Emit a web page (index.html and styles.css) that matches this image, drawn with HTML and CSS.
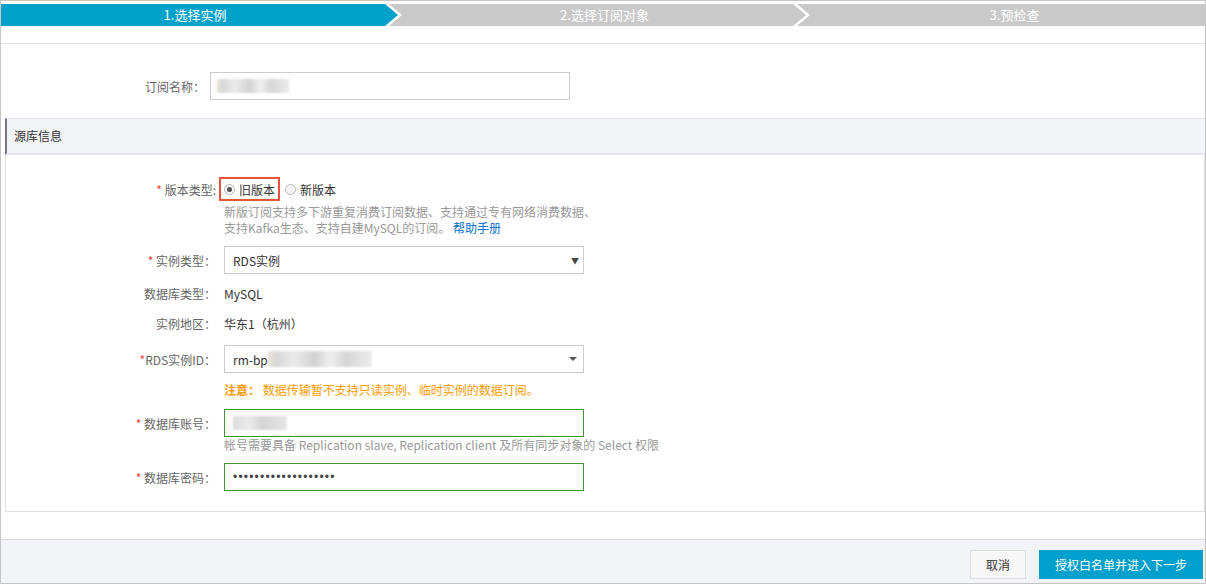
FILE: index.html
```html
<!DOCTYPE html>
<html lang="zh-CN">
<head>
<meta charset="utf-8">
<title>选择实例</title>
<link rel="stylesheet" href="styles.css">
</head>
<body>
<div class="frame">
  <div class="topbar">
    <div class="steps">
      <div class="step step1">1.选择实例</div>
      <div class="step step2">2.选择订阅对象</div>
      <div class="step step3">3.预检查</div>
    </div>
  </div>

  <div class="content">
    <div class="name-row">
      <label class="name-label">订阅名称：</label>
      <div class="field name-input"><span class="blur blur-name"></span></div>
    </div>

    <div class="section">
      <div class="section-head">源库信息</div>
      <div class="section-body">
        <div class="row row-radio">
          <label class="lbl"><span class="req">*</span> 版本类型:</label>
          <div class="ctrl radios">
            <span class="highlight"><span class="radio checked"></span><span class="radio-text">旧版本</span></span>
            <span class="radio"></span><span class="radio-text dark">新版本</span>
          </div>
        </div>
        <div class="row-help">
          <div class="help">新版订阅支持多下游重复消费订阅数据、支持通过专有网络消费数据、<br>支持Kafka生态、支持自建MySQL的订阅。 <a class="link">帮助手册</a></div>
        </div>
        <div class="row row-select1">
          <label class="lbl"><span class="req">*</span> 实例类型：</label>
          <div class="field select"><span>RDS实例</span><span class="arrow">▼</span></div>
        </div>
        <div class="row row-text1">
          <label class="lbl">数据库类型：</label>
          <div class="value">MySQL</div>
        </div>
        <div class="row row-text2">
          <label class="lbl">实例地区：</label>
          <div class="value">华东1（杭州）</div>
        </div>
        <div class="row row-select2">
          <label class="lbl"><span class="req">*</span>RDS实例ID：</label>
          <div class="field select"><span>rm-bp</span><span class="blur blur-id"></span><span class="caret"></span></div>
        </div>
        <div class="row-warn">
          <div class="warn"><b>注意：</b> 数据传输暂不支持只读实例、临时实例的数据订阅。</div>
        </div>
        <div class="row row-account">
          <label class="lbl"><span class="req">*</span> 数据库账号：</label>
          <div class="field ok"><span class="blur blur-acc"></span></div>
        </div>
        <div class="row-help2">
          <div class="help">帐号需要具备 Replication slave, Replication client 及所有同步对象的 Select 权限</div>
        </div>
        <div class="row row-pass">
          <label class="lbl"><span class="req">*</span> 数据库密码：</label>
          <div class="field ok"><span class="dots">•••••••••••••••••••</span></div>
        </div>
      </div>
    </div>
  </div>

  <div class="footer">
    <button class="btn">取消</button>
    <button class="btn primary">授权白名单并进入下一步</button>
  </div>
</div>
</body>
</html>
```
FILE: styles.css
```css
* { box-sizing: border-box; }
body {
  margin: 0;
  font-family: "Noto Sans CJK SC", "Liberation Sans", sans-serif;
  font-size: 12px;
  color: #333;
  background: #fff;
}
.frame {
  width: 1206px;
  height: 584px;
  border: 1px solid #c6c6c6;
  display: flex;
  flex-direction: column;
}
.topbar {
  height: 43px;
  border-bottom: 1px solid #e3e5e8;
  padding-top: 3px;
}
.steps { display: flex; height: 22px; }
.step {
  height: 22px;
  line-height: 22px;
  text-align: center;
  color: #fff;
  font-size: 13px;
  background: #c9c9c9;
}
.step1 {
  width: 397px;
  background: #00a2c9;
  padding-right: 9px;
  clip-path: polygon(0 0, calc(100% - 13px) 0, 100% 50%, calc(100% - 13px) 100%, 0 100%);
}
.step2 {
  width: 417px;
  margin-left: -9px;
  padding-left: 27px;
  padding-right: 13px;
  clip-path: polygon(0 0, calc(100% - 13px) 0, 100% 50%, calc(100% - 13px) 100%, 0 100%, 13px 50%);
}
.step3 {
  flex: 1;
  margin-left: -9px;
  padding-left: 27px;
  clip-path: polygon(0 0, 100% 0, 100% 100%, 0 100%, 13px 50%);
}
.content { flex: 1; }
.name-row {
  display: flex;
  align-items: center;
  margin-top: 28px;
}
.name-label {
  width: 204px;
  text-align: right;
  color: #666;
  margin-right: 5px;
}
.field {
  width: 360px;
  height: 28px;
  border: 1px solid #ccc;
  display: flex;
  align-items: center;
  padding-left: 8px;
  background: #fff;
}
.name-input { padding-left: 6px; }
.blur {
  display: inline-block;
  height: 14px;
  filter: blur(1.2px);
  background: linear-gradient(90deg, #e9e4d6 0, #d8d8d8 8%, #ebebeb 25%, #d2d2d2 45%, #efefef 60%, #d6d6d6 75%, #ececec 100%);
}
.blur-name { width: 72px; }
.blur-id { width: 104px; height: 16px; }
.blur-acc { width: 54px; background: linear-gradient(90deg, #dcdcdc 0, #eaeaea 30%, #d4d4d4 55%, #e6e6e6 100%); }
.section {
  margin: 18px 0 0 4px;
}
.section-head {
  height: 37px;
  border-top: 1px solid #e3e5ea;
  border-bottom: 2px solid #e3e5ea;
  border-left: 2px solid #747483;
  background: #f3f4f8;
  padding-left: 7px;
  line-height: 34px;
  color: #333;
}
.section-body {
  border: 1px solid #e1e1e1;
  border-top: none;
  padding-top: 22px;
  padding-bottom: 20px;
}
.row { display: flex; align-items: center; }
.lbl {
  width: 210px;
  margin-right: 8px;
  text-align: right;
  color: #666;
  white-space: nowrap;
}
.req { color: #f04134; }
.row-radio { height: 24px; }
.radios { display: flex; align-items: center; }
.highlight {
  display: inline-flex;
  align-items: center;
  height: 24px;
  margin-left: -5px;
  border: 2px solid #e4553b;
  padding: 0 3px 0 3px;
  margin-right: 5px;
}
.radio {
  width: 11px;
  height: 11px;
  border: 1px solid #b8b8b8;
  border-radius: 50%;
  background: #f4f4f4;
  display: inline-flex;
  align-items: center;
  justify-content: center;
  margin-right: 4px;
}
.radio.checked::after {
  content: "";
  width: 5px;
  height: 5px;
  border-radius: 50%;
  background: #555;
}
.radio-text { color: #333; }
.row-help { margin: 3px 0 0 218px; }
.help {
  color: #999;
  line-height: 16px;
}
.link { color: #0070cc; text-decoration: none; }
.row-select1 { margin-top: 10px; }
.select {
  justify-content: flex-start;
}
.arrow {
  margin-left: auto;
  margin-right: 4px;
  font-size: 8px;
  color: #444;
}
.caret {
  margin-left: auto;
  margin-right: 6px;
  width: 0;
  height: 0;
  border-left: 4px solid transparent;
  border-right: 4px solid transparent;
  border-top: 4px solid #555;
}
.row-text1 { margin-top: 9px; height: 20px; }
.row-text2 { margin-top: 10px; height: 20px; }
.value { color: #333; }
.row-select2 { margin-top: 12px; }
.row-warn { margin: 9px 0 0 218px; }
.warn { color: #ff9900; line-height: 16px; }
.warn b { font-weight: bold; }
.row-account { margin-top: 11px; }
.ok { border-color: #3c9a2c; }
.row-help2 { margin: 0 0 0 218px; }
.row-pass { margin-top: 10px; }
.dots {
  font-family: "Liberation Sans", sans-serif;
  font-size: 12px;
  letter-spacing: 1.2px;
  color: #444;
}
.footer {
  height: 44px;
  border-top: 1px solid #dcdcdc;
  background: #f3f4f8;
  display: flex;
  justify-content: flex-end;
  align-items: flex-start;
  gap: 13px;
  padding: 10px 2px 0 0;
}
.btn {
  height: 29px;
  padding: 0 15px;
  border: 1px solid #dcdcdc;
  background: #f7f7f7;
  color: #333;
  font-family: "Noto Sans CJK SC", "Liberation Sans", sans-serif;
  font-size: 12px;
  cursor: pointer;
}
.btn.primary {
  background: #00a0cc;
  border-color: #00a0cc;
  color: #fff;
}
```
